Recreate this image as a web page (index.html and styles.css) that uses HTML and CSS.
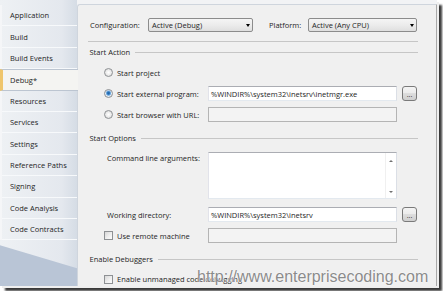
FILE: index.html
```html
<!DOCTYPE html>
<html lang="en">
<head>
<meta charset="utf-8">
<title>Project Properties - Debug</title>
<link rel="stylesheet" href="styles.css">
</head>
<body>
<div class="frame">
  <nav class="sidebar">
    <ul class="tabs">
      <li class="tab">Application</li>
      <li class="tab">Build</li>
      <li class="tab">Build Events</li>
      <li class="tab active">Debug*</li>
      <li class="tab">Resources</li>
      <li class="tab">Services</li>
      <li class="tab">Settings</li>
      <li class="tab">Reference Paths</li>
      <li class="tab">Signing</li>
      <li class="tab">Code Analysis</li>
      <li class="tab">Code Contracts</li>
    </ul>
    <div class="sidebar-foot"></div>
  </nav>

  <main class="panel">
    <div class="config">
      <span class="lbl lbl-config">Configuration:</span>
      <div class="combo"><span>Active (Debug)</span><i class="arrow"></i></div>
      <span class="lbl lbl-platform">Platform:</span>
      <div class="combo"><span>Active (Any CPU)</span><i class="arrow"></i></div>
    </div>
    <hr class="sep">

    <section class="group">
      <h2 class="group-title">Start Action</h2>
      <div class="row">
        <label class="opt"><span class="radio"></span><span>Start project</span></label>
      </div>
      <div class="row">
        <label class="opt"><span class="radio checked"></span><span>Start external program:</span></label>
        <div class="field">%WINDIR%\system32\inetsrv\inetmgr.exe</div>
        <div class="browse">...</div>
      </div>
      <div class="row">
        <label class="opt"><span class="radio"></span><span>Start browser with URL:</span></label>
        <div class="field disabled"></div>
      </div>
    </section>

    <section class="group group-options">
      <h2 class="group-title">Start Options</h2>
      <div class="row row-area">
        <span class="lbl-indent lbl-top">Command line arguments:</span>
        <div class="textarea">
          <div class="scrollbar"><i class="sb-up"></i><i class="sb-down"></i></div>
        </div>
      </div>
      <div class="row row-field row-wd">
        <span class="lbl-indent">Working directory:</span>
        <div class="field">%WINDIR%\system32\inetsrv</div>
        <div class="browse">...</div>
      </div>
      <div class="row row-field row-remote">
        <label class="opt"><span class="check"></span><span>Use remote machine</span></label>
        <div class="field disabled"></div>
      </div>
    </section>

    <section class="group group-debuggers">
      <h2 class="group-title">Enable Debuggers</h2>
      <div class="row row-field row-unmanaged">
        <label class="opt"><span class="check"></span><span>Enable unmanaged code debugging</span></label>
      </div>
    </section>
  </main>

  <div class="watermark">http://www.enterprisecoding.com</div>
</div>
</body>
</html>
```

FILE: styles.css
```css
* {
  box-sizing: border-box;
  margin: 0;
  padding: 0;
}

html,
body {
  width: 443px;
  height: 291px;
  overflow: hidden;
  background: #ffffff;
}

body {
  font-family: "Open Sans", "Noto Sans", sans-serif;
  font-size: 7.5px;
  line-height: 12px;
  color: #1e1e1e;
}

.frame {
  position: relative;
  display: flex;
  width: 437px;
  height: 286px;
  overflow: hidden;
  background: #f2f3f5;
  box-shadow: 2px 2px 0 0 #efefef, 5px 5px 2px 0 #3a3a3a;
}

/* ---------- sidebar ---------- */
.sidebar {
  width: 77px;
  flex: none;
  display: flex;
  flex-direction: column;
  padding-top: 5px;
  background: linear-gradient(to right, #eef1f4 0%, #e4e8ee 80%, #d5dce5 100%);
}

.tabs {
  list-style: none;
  border-left: 2px solid #f5f6f8;
}

.tab {
  height: 21.4px;
  display: flex;
  align-items: center;
  padding-left: 8px;
  border-bottom: 1px solid #f7f9fb;
  white-space: nowrap;
}

.tab.active {
  position: relative;
  z-index: 1;
  margin-left: -2px;
  margin-right: -1px;
  padding-left: 7px;
  border-left: 3px solid #efc56c;
  border-top: 1px solid #bcc5d1;
  border-bottom: 1px solid #bcc5d1;
  background: #f4f4f2;
}

.sidebar-foot {
  flex: 1;
  margin-top: 5px;
  background: #b9c5d6;
  clip-path: polygon(0 0, 100% 23px, 100% 100%, 0 100%);
}

/* ---------- panel ---------- */
.panel {
  flex: 1;
  margin-top: 4px;
  padding: 13px 18px 0 10px;
  background: #f0f0f0;
  border: 1px solid #cfd5dd;
  border-right-color: #a9a9a9;
  border-bottom: none;
  border-radius: 3px 0 0 0;
}

.config {
  display: grid;
  grid-template-columns: 60px 105px 55px 109px;
  height: 14px;
  align-items: center;
}

.lbl-config {
  padding-left: 2px;
}

.lbl-platform {
  padding-left: 16px;
}

.combo {
  height: 14px;
  display: flex;
  align-items: center;
  padding-left: 3px;
  border: 1px solid #8c8c8c;
  border-radius: 2px;
  background: linear-gradient(#f5f5f5, #ececec 50%, #dfdfdf);
  white-space: nowrap;
}

.arrow {
  margin-left: auto;
  margin-right: 2px;
  width: 0;
  height: 0;
  border-left: 2.5px solid transparent;
  border-right: 2.5px solid transparent;
  border-top: 3px solid #000;
}

.sep {
  border: 0;
  height: 1px;
  margin-top: 9px;
  background: #c6c6c6;
}

.group-title {
  display: flex;
  align-items: center;
  height: 12px;
  margin-top: 4px;
  margin-bottom: 4px;
  padding-left: 1.5px;
  font-size: 7.5px;
  font-weight: normal;
  white-space: nowrap;
}

.group-title::after {
  content: "";
  flex: 1;
  height: 1px;
  margin-left: 5px;
  background: #c6c6c6;
}

.group-options .group-title {
  margin-top: 7px;
  margin-bottom: 8px;
}

.group-debuggers .group-title {
  margin-top: 10px;
  margin-bottom: 6.5px;
}

.row {
  display: grid;
  grid-template-columns: 115px 189px 15px;
  column-gap: 5px;
  align-items: center;
  height: 21px;
}

.row-area {
  height: 47px;
  align-items: stretch;
}

.row-field {
  height: 15px;
}

.row-wd {
  margin-top: 8px;
}

.row-remote {
  margin-top: 6px;
}

.row-unmanaged {
  grid-template-columns: 1fr;
}

.opt {
  display: flex;
  align-items: center;
  gap: 4.5px;
  padding-left: 15.5px;
  white-space: nowrap;
}

.lbl-indent {
  padding-left: 19px;
  white-space: nowrap;
}

.lbl-top {
  align-self: start;
}

.radio {
  flex: none;
  width: 9px;
  height: 9px;
  border-radius: 50%;
  border: 1px solid #8e9194;
  background: radial-gradient(circle at 50% 50%, #ffffff 0, #eeeeee 45%, #d2d2d2 100%);
}

.radio.checked {
  background: radial-gradient(circle at 50% 45%, #1d5f9f 0, #2f79c0 1.3px, #8fbce6 2.4px, #e6eef5 3px, #d6d6d6 100%);
}

.check {
  flex: none;
  width: 9px;
  height: 9px;
  border: 1px solid #8e9194;
  background: linear-gradient(135deg, #d7d7d7, #f1f1f1 60%, #fbfbfb);
}

.field {
  height: 15px;
  display: flex;
  align-items: center;
  padding-left: 2px;
  overflow: hidden;
  white-space: nowrap;
  background: #ffffff;
  border: 1px solid #abadb3;
  border-color: #abadb3 #dbdfe6 #e3e9ef #e2e3ea;
}

.field.disabled {
  background: #f3f3f3;
  border-color: #b4b4b4;
}

.browse {
  height: 15px;
  display: flex;
  align-items: flex-end;
  justify-content: center;
  padding-bottom: 1px;
  font-size: 7px;
  line-height: 8px;
  border: 1px solid #7a7a7a;
  border-radius: 3px;
  background: linear-gradient(#f4f4f4, #ebebeb 50%, #dddddd 50%, #cfcfcf);
}

.textarea {
  display: flex;
  justify-content: flex-end;
  background: #ffffff;
  border: 1px solid #abadb3;
  border-color: #abadb3 #dbdfe6 #e3e9ef #e2e3ea;
}

.scrollbar {
  width: 11px;
  display: flex;
  flex-direction: column;
  align-items: center;
  justify-content: space-between;
  padding: 7px 0 5px;
  border-left: 1px solid #f0f0f0;
}

.sb-up,
.sb-down {
  width: 0;
  height: 0;
  border-left: 2px solid transparent;
  border-right: 2px solid transparent;
}

.sb-up {
  border-bottom: 2.5px solid #707070;
}

.sb-down {
  border-top: 2.5px solid #707070;
}

/* ---------- watermark ---------- */
.watermark {
  position: absolute;
  left: 197px;
  top: 268.5px;
  font-family: "Liberation Sans", Arial, sans-serif;
  font-size: 16px;
  line-height: 1;
  color: #8b8b8b;
  white-space: nowrap;
  text-shadow: 0 0 1px #ffffff, 0 0 2px #ffffff;
}
```
